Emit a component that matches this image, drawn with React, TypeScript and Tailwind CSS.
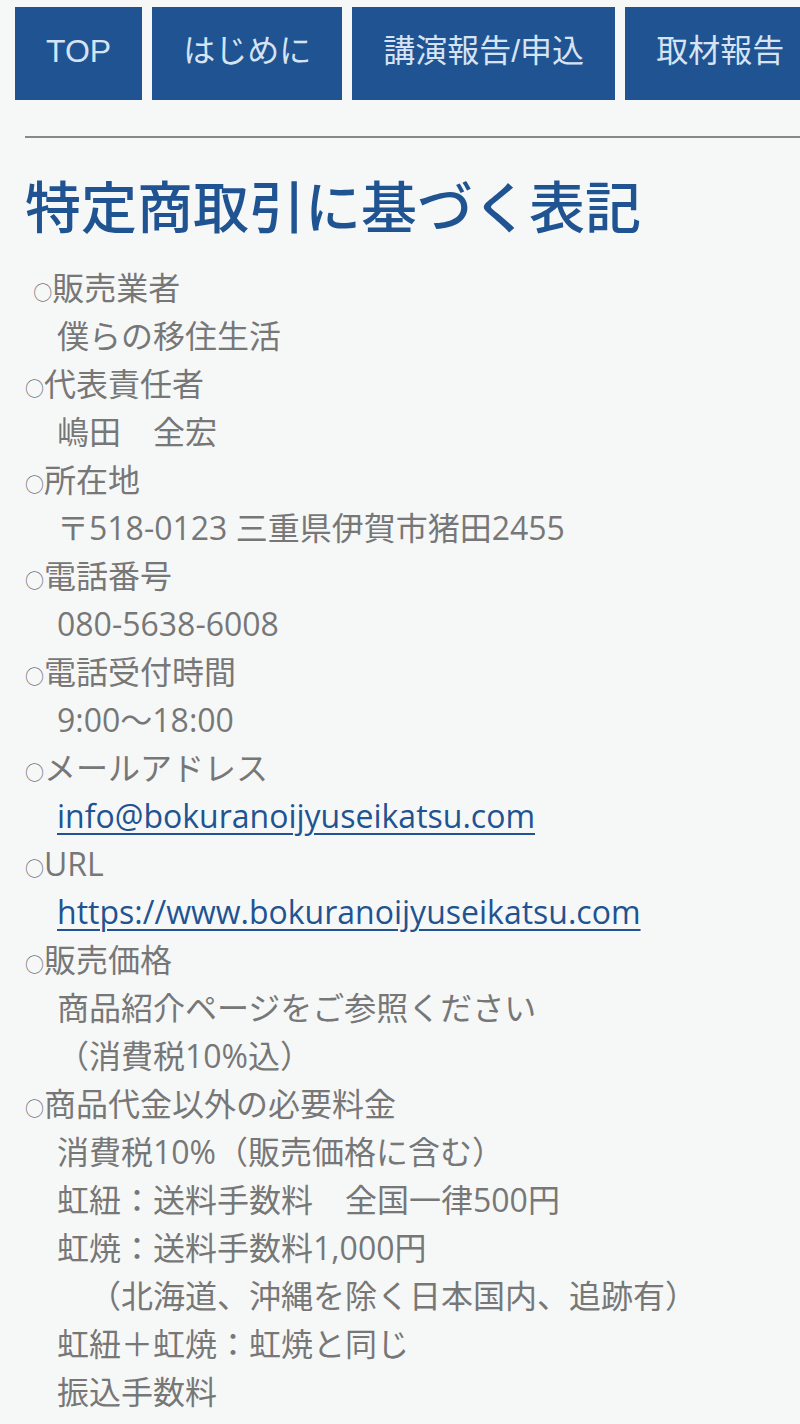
const navItems = ["TOP", "はじめに", "講演報告/申込", "取材報告"];

type Line = { text: string; link?: boolean; head?: boolean };

const lines: Line[] = [
  { text: " ○販売業者", head: true },
  { text: "　僕らの移住生活" },
  { text: "○代表責任者", head: true },
  { text: "　嶋田　全宏" },
  { text: "○所在地", head: true },
  { text: "　〒518-0123 三重県伊賀市猪田2455" },
  { text: "○電話番号", head: true },
  { text: "　080-5638-6008" },
  { text: "○電話受付時間", head: true },
  { text: "　9:00〜18:00" },
  { text: "○メールアドレス", head: true },
  { text: "info@bokuranoijyuseikatsu.com", link: true },
  { text: "○URL", head: true },
  { text: "https://www.bokuranoijyuseikatsu.com", link: true },
  { text: "○販売価格", head: true },
  { text: "　商品紹介ページをご参照ください" },
  { text: "　（消費税10%込）" },
  { text: "○商品代金以外の必要料金", head: true },
  { text: "　消費税10%（販売価格に含む）" },
  { text: "　虹紐：送料手数料　全国一律500円" },
  { text: "　虹焼：送料手数料1,000円" },
  { text: "　　（北海道、沖縄を除く日本国内、追跡有）" },
  { text: "　虹紐＋虹焼：虹焼と同じ" },
  { text: "　振込手数料" },
];

// ○ is drawn smaller than the body text
function Head({ text }: { text: string }) {
  const i = text.indexOf("○");
  return (
    <>
      {text.slice(0, i)}
      <span className="text-[19px]">○</span>
      {text.slice(i + 1)}
    </>
  );
}

export default function App() {
  return (
    <div className="min-h-screen bg-[#f6f8f8] overflow-hidden font-['Open_Sans','Noto_Sans_CJK_JP',sans-serif] [text-spacing-trim:space-all]">
      {/* ナビ */}
      <nav className="flex gap-[10px] pt-[7px] pl-[15px]">
        {navItems.map((item) => (
          <a
            key={item}
            href="#"
            className="shrink-0 h-[93px] px-[31px] pb-[6px] flex items-center bg-[#1f5392] text-[#d5e3f3] text-[32px] font-['Liberation_Sans','Noto_Sans_CJK_JP',sans-serif] whitespace-nowrap"
          >
            {item}
          </a>
        ))}
      </nav>

      <div className="pl-[25px]">
        <hr className="mt-[36px] border-0 h-[2px] bg-[#888888]" />

        <h1 className="mt-[26px] text-[56px] leading-[84px] text-[#1f5392] font-medium whitespace-nowrap">
          特定商取引に基づく表記
        </h1>

        <div className="mt-[16px] text-[32px] leading-[48px] text-[#777777] whitespace-pre">
          {lines.map((l, idx) =>
            l.link ? (
              <div key={idx} className="h-[48px]">
                {"　"}
                <a href="#" className="text-[#1f5392] underline underline-offset-[5px] decoration-[2px]">
                  {l.text}
                </a>
              </div>
            ) : (
              <div key={idx} className="h-[48px]">
                {l.head ? <Head text={l.text} /> : l.text}
              </div>
            )
          )}
        </div>
      </div>
    </div>
  );
}
